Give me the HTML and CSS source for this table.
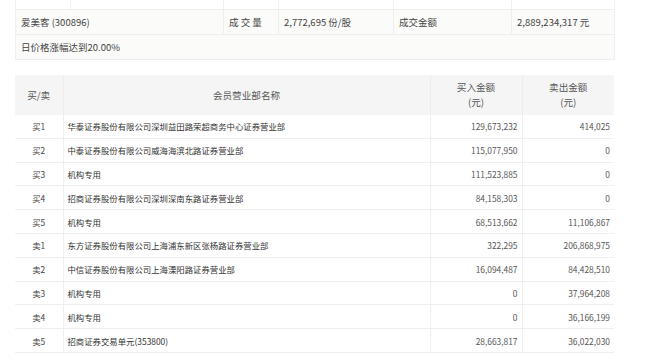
FILE: index.html
```html
<!DOCTYPE html>
<html lang="zh-CN">
<head>
    <meta charset="UTF-8">
    <meta name="viewport" content="width=device-width, initial-scale=1.0">
    <title>龙虎榜</title>
<link rel="stylesheet" href="styles.css">
</head>
<body>
<div class="wrapper">
    <table class="summary">
        <colgroup>
            <col style="width:55px"><col style="width:153px"><col style="width:55px">
            <col style="width:115px"><col style="width:118px"><col style="width:103px">
        </colgroup>
        <tr class="cut">
            <td></td><td></td><td></td><td></td><td></td><td></td>
        </tr>
        <tr>
            <td colspan="2">爱美客 (300896)</td>
            <td>成 交 量</td>
            <td>2,772,695 份/股</td>
            <td>成交金额</td>
            <td>2,889,234,317 元</td>
        </tr>
        <tr>
            <td colspan="6">日价格涨幅达到20.00%</td>
        </tr>
    </table>

    <table class="seats">
        <colgroup>
            <col style="width:48px"><col style="width:367px"><col style="width:92px"><col style="width:92px">
        </colgroup>
        <thead>
            <tr>
                <th>买/卖</th>
                <th>会员营业部名称</th>
                <th>买入金额<br>(元)</th>
                <th>卖出金额<br>(元)</th>
            </tr>
        </thead>
        <tbody>
            <tr><td class="side">买1</td><td>华泰证券股份有限公司深圳益田路荣超商务中心证券营业部</td><td class="num">129,673,232</td><td class="num">414,025</td></tr>
            <tr><td class="side">买2</td><td>中泰证券股份有限公司威海海滨北路证券营业部</td><td class="num">115,077,950</td><td class="num">0</td></tr>
            <tr><td class="side">买3</td><td>机构专用</td><td class="num">111,523,885</td><td class="num">0</td></tr>
            <tr><td class="side">买4</td><td>招商证券股份有限公司深圳深南东路证券营业部</td><td class="num">84,158,303</td><td class="num">0</td></tr>
            <tr><td class="side">买5</td><td>机构专用</td><td class="num">68,513,662</td><td class="num">11,106,867</td></tr>
            <tr><td class="side">卖1</td><td>东方证券股份有限公司上海浦东新区张杨路证券营业部</td><td class="num">322,295</td><td class="num">206,868,975</td></tr>
            <tr><td class="side">卖2</td><td>中信证券股份有限公司上海溧阳路证券营业部</td><td class="num">16,094,487</td><td class="num">84,428,510</td></tr>
            <tr><td class="side">卖3</td><td>机构专用</td><td class="num">0</td><td class="num">37,964,208</td></tr>
            <tr><td class="side">卖4</td><td>机构专用</td><td class="num">0</td><td class="num">36,166,199</td></tr>
            <tr><td class="side">卖5</td><td>招商证券交易单元(353800)</td><td class="num">28,663,817</td><td class="num">36,022,030</td></tr>
        </tbody>
    </table>
</div>
</body>
</html>
```

FILE: styles.css
```css
body{
    margin: 0;
    background-color: white;
    font-family: "Noto Sans CJK SC", "Noto Sans", sans-serif;
    color: #333;
}
.wrapper{
    padding-left: 15px;
    width: 599px;
}
table{
    border-collapse: collapse;
    table-layout: fixed;
    width: 599px;
}
.summary{
    background-color: #fbfbf9;
    font-size: 9.5px;
    color: #444;
}
.summary td{
    border: 1px solid #eeeeec;
    height: 24px;
    padding: 0 0 0 5px;
    white-space: nowrap;
}
.summary .cut td{
    height: 9px;
    background-color: white;
    border-top: 0;
}
.seats{
    margin-top: 15px;
    font-size: 8.4px;
}
.seats th{
    background-color: #f5f5f5;
    font-weight: normal;
    font-size: 9.6px;
    color: #555;
    height: 40px;
    line-height: 15px;
    padding: 0;
    border-left: 1px solid #ececec;
}
.seats th:first-child{
    border-left: 0;
}
.seats td{
    height: 22.8px;
    padding: 0 4px;
    border-bottom: 1px solid #efefef;
    border-left: 1px solid #efefef;
    white-space: nowrap;
}
.seats td:first-child{
    border-left: 0;
}
.seats .side{
    text-align: center;
    color: #444;
}
.seats .num{
    text-align: right;
    color: #555;
}
```
